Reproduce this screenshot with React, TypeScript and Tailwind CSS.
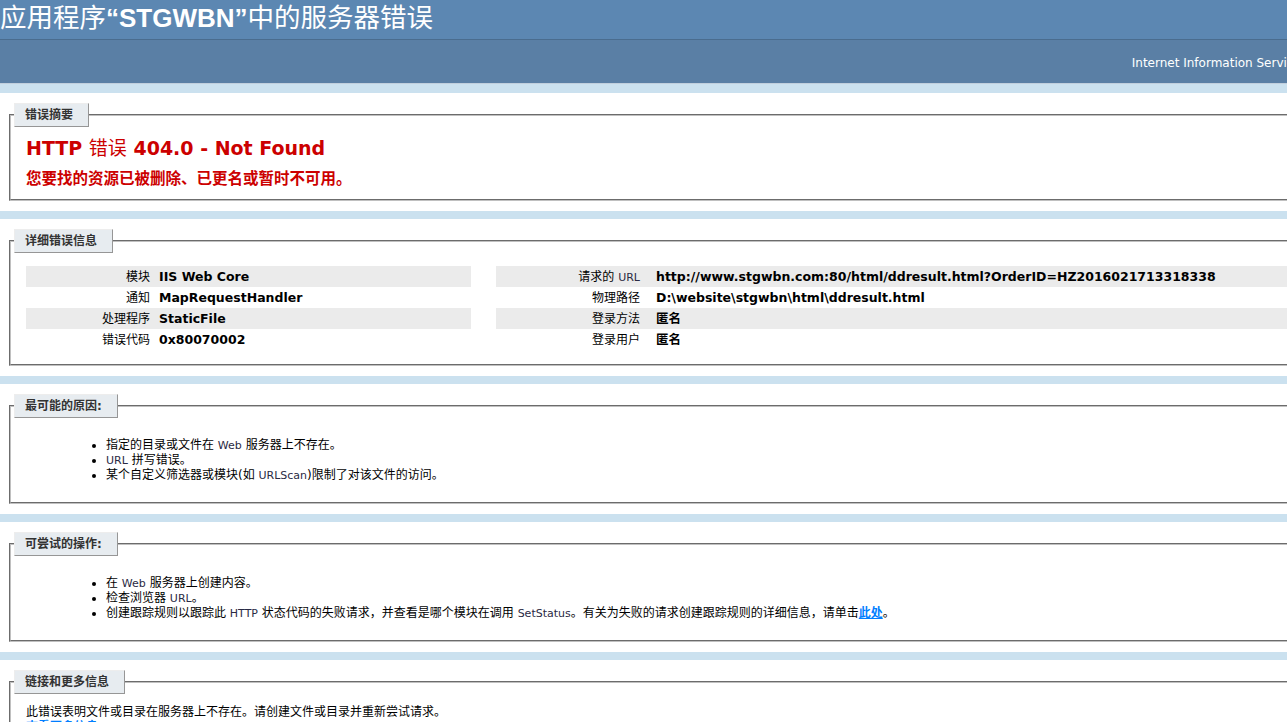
import React from "react";

const Legend = ({ children }: { children: React.ReactNode }) => (
  <legend className="-ml-[12px] h-[24px] border border-t-[#EDEDED] border-l-[#EDEDED] border-r-[#969696] border-b-[#969696] bg-[#E7ECF0] pl-[10px] pr-[15px] text-[12px] leading-[22px] font-bold text-[#333333]">
    {children}
  </legend>
);

const L = ({ children }: { children: React.ReactNode }) => (
  <span className="text-[11px] text-[#2a2a44]">{children}</span>
);

const Box = ({
  title,
  children,
  pb,
}: {
  title: string;
  children: React.ReactNode;
  pb: string;
}) => (
  <div className="mt-[8px] w-[1324px] bg-white pt-[10px] pb-[10px] pl-[9px] pr-[10px]">
    <fieldset
      className={`w-full min-w-0 border-2 border-[#c0c0c0] [border-style:groove] px-[15px] ${pb}`}
    >
      <Legend>{title}</Legend>
      {children}
    </fieldset>
  </div>
);

const leftRows: [React.ReactNode, string][] = [
  ["模块", "IIS Web Core"],
  ["通知", "MapRequestHandler"],
  ["处理程序", "StaticFile"],
  ["错误代码", "0x80070002"],
];

const rightRows: [React.ReactNode, string][] = [
  [
    <>
      请求的 <L>URL</L>
    </>,
    "http://www.stgwbn.com:80/html/ddresult.html?OrderID=HZ2016021713318338",
  ],
  ["物理路径", "D:\\website\\stgwbn\\html\\ddresult.html"],
  ["登录方法", "匿名"],
  ["登录用户", "匿名"],
];

export default function App() {
  return (
    <div className="w-[1287px] h-[722px] overflow-hidden bg-[#CBE1EF] text-black [font-family:'DejaVu_Sans','Noto_Sans_CJK_SC',sans-serif]">
      <div className="w-[1340px]">
        {/* Title bar */}
        <div className="h-[40px] bg-[#5C87B2] border-b border-[#4A6C8E]">
          <h1 className="pt-[1px] text-[26px] leading-[34px] font-bold text-white whitespace-nowrap [font-family:'Liberation_Sans','Noto_Sans_CJK_SC',sans-serif]">
            <span className="font-normal text-[26.5px]">应用程序</span>“STGWBN”
            <span className="font-normal text-[26.5px]">中的服务器错误</span>
          </h1>
        </div>
        {/* Server version */}
        <div className="h-[44px] bg-[#5A7FA5] border-b border-[#C1CFDD] pt-[16px] pr-[10px] text-right text-[12px] leading-[15px] text-white whitespace-nowrap">
          Internet Information Services 7.5
        </div>

        <div className="h-[1px]" />

        {/* Summary */}
        <Box title="错误摘要" pb="pb-[10px]">
          <h2 className="mt-[10px] text-[19px] leading-[22px] font-bold text-[#CC0000] whitespace-nowrap">
            HTTP <span className="font-normal">错误</span> 404.0 - Not Found
          </h2>
          <h3 className="mt-[10px] text-[15.5px] leading-[20px] font-bold text-[#CC0000] whitespace-nowrap">
            您要找的资源已被删除、已更名或暂时不可用。
          </h3>
        </Box>

        {/* Details */}
        <Box title="详细错误信息" pb="pb-[14px]">
          <div className="mt-[13px] flex">
            <div className="w-[445px] mr-[25px]">
              {leftRows.map(([k, v], i) => (
                <div
                  key={i}
                  className={`grid grid-cols-[133px_1fr] h-[21px] ${i % 2 === 0 ? "bg-[#ebebeb]" : ""}`}
                >
                  <div className="text-right pr-[9px] pt-[4px] text-[12px] leading-[15px] whitespace-nowrap">
                    {k}
                  </div>
                  <div className="pt-[3px] text-[12.5px] leading-[15px] font-bold whitespace-nowrap">
                    {v}
                  </div>
                </div>
              ))}
            </div>
            <div className="w-[801px]">
              {rightRows.map(([k, v], i) => (
                <div
                  key={i}
                  className={`grid grid-cols-[160px_1fr] h-[21px] ${i % 2 === 0 ? "bg-[#ebebeb]" : ""}`}
                >
                  <div className="text-right pr-[16px] pt-[4px] text-[12px] leading-[15px] whitespace-nowrap">
                    {k}
                  </div>
                  <div className="pt-[3px] text-[12.5px] leading-[15px] font-bold whitespace-nowrap">
                    {v}
                  </div>
                </div>
              ))}
            </div>
          </div>
        </Box>

        {/* Causes */}
        <Box title="最可能的原因:" pb="pb-[19px]">
          <ul className="mt-[20px] ml-[40px] pl-[40px] list-disc text-[12px] leading-[15px]">
            <li>
              指定的目录或文件在 <L>Web</L> 服务器上不存在。
            </li>
            <li>
              <L>URL</L> 拼写错误。
            </li>
            <li>
              某个自定义筛选器或模块(如 <L>URLScan</L>)限制了对该文件的访问。
            </li>
          </ul>
        </Box>

        {/* Things to try */}
        <Box title="可尝试的操作:" pb="pb-[19px]">
          <ul className="mt-[20px] ml-[40px] pl-[40px] list-disc text-[12px] leading-[15px]">
            <li>
              在 <L>Web</L> 服务器上创建内容。
            </li>
            <li>
              检查浏览器 <L>URL</L>。
            </li>
            <li className="whitespace-nowrap">
              创建跟踪规则以跟踪此 <L>HTTP</L> 状态代码的失败请求，并查看是哪个模块在调用 <L>SetStatus</L>。有关为失败的请求创建跟踪规则的详细信息，请单击
              <a href="#" className="font-bold text-[#007EFF] underline">
                此处
              </a>
              。
            </li>
          </ul>
        </Box>

        {/* Links */}
        <Box title="链接和更多信息" pb="pb-[10px]">
          <p className="mt-[11px] text-[12px] leading-[15px]">
            此错误表明文件或目录在服务器上不存在。请创建文件或目录并重新尝试请求。
          </p>
          <p className="text-[12px] leading-[15px]">
            <a href="#" className="font-bold text-[#007EFF] underline">
              查看更多信息 »
            </a>
          </p>
        </Box>
      </div>
    </div>
  );
}
